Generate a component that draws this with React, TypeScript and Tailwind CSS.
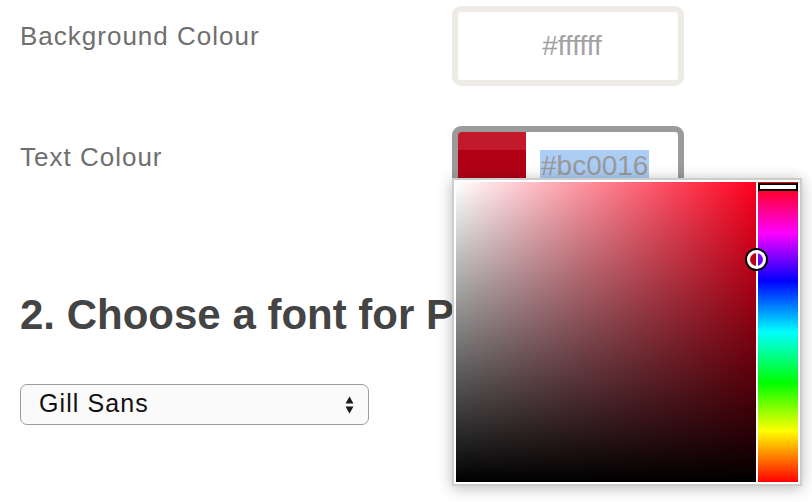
export default function App() {
  return (
    <div className="relative h-[502px] w-[812px] overflow-hidden bg-white font-['Liberation_Sans',Arial,sans-serif]">
      <div className="pl-5">
        {/* Background colour row */}
        <div className="flex items-start pt-[6px]">
          <div className="w-[432px] pt-[17px] text-[26px] leading-none tracking-[1px] text-[#6f6f6f]">
            Background Colour
          </div>
          <div className="flex h-[80px] w-[232px] items-center justify-center rounded-[9px] border-[6px] border-[#eeeae6] pl-2 text-[28px] leading-none text-[#a2a2a2]">
            #ffffff
          </div>
        </div>

        {/* Text colour row */}
        <div className="mt-[40px] flex items-start">
          <div className="w-[432px] pt-[18px] text-[26px] leading-none tracking-[1px] text-[#6f6f6f]">
            Text Colour
          </div>
          <div className="flex h-[80px] w-[232px] overflow-hidden rounded-[9px] border-[6px] border-[#9b9b9b]">
            <div className="flex w-[68px] flex-col">
              <div className="h-[18px] bg-[#c21a2b]" />
              <div className="flex-1 bg-[#b10016]" />
            </div>
            <div className="pl-[14px] pt-[18px]">
              <div className="inline-block h-[32px] bg-[#accdf4] px-[1px] text-[28px] leading-[32px] text-[#9a9a9a]">
                #bc0016
              </div>
            </div>
          </div>
        </div>

        <h2 className="mt-[88px] whitespace-nowrap text-[42px] font-bold leading-none text-[#444444]">
          2. Choose a font for Print
        </h2>

        <div className="mt-[48px] flex h-[41px] w-[349px] items-center justify-between rounded-[7px] border-[1.5px] border-[#9c9c9c] bg-[#fafafa] pb-[2px] pl-[18px] pr-[14px]">
          <span className="text-[25px] leading-none tracking-[1.1px] text-[#111111]">Gill Sans</span>
          <svg width="9" height="18" viewBox="0 0 9 18" className="mt-[2px]">
            <path d="M4.5 0.5 L8.5 7.5 L0.5 7.5 Z" fill="#1a1a1a" />
            <path d="M4.5 17.5 L8.5 10.5 L0.5 10.5 Z" fill="#1a1a1a" />
          </svg>
        </div>
      </div>

      {/* Colour picker popup */}
      <div className="absolute left-[452px] top-[178px] flex gap-[2px] border-2 border-[#cccccc] bg-white p-[2px] shadow-[0_2px_14px_rgba(0,0,0,0.28)]">
        <div className="relative h-[300px] w-[300px] bg-[#ff001e] bg-[linear-gradient(to_right,#ffffff,rgba(255,255,255,0))]">
          <div className="h-full w-full bg-[linear-gradient(to_bottom,rgba(0,0,0,0),#000000)]" />
          <div className="absolute left-[289px] top-[66px] z-10 h-[23px] w-[23px] rounded-full border-[2.5px] border-black">
            <div className="h-full w-full rounded-full border-[3px] border-white" />
          </div>
        </div>
        <div className="relative h-[300px] w-[40px] bg-[linear-gradient(to_bottom,#ff0000_0%,#ff00ff_17%,#0000ff_33%,#00ffff_50%,#00ff00_67%,#ffff00_83%,#ff0000_100%)]">
          <div className="absolute left-0 right-0 top-[1px] h-[8px] border-2 border-black bg-white" />
        </div>
      </div>
    </div>
  );
}
